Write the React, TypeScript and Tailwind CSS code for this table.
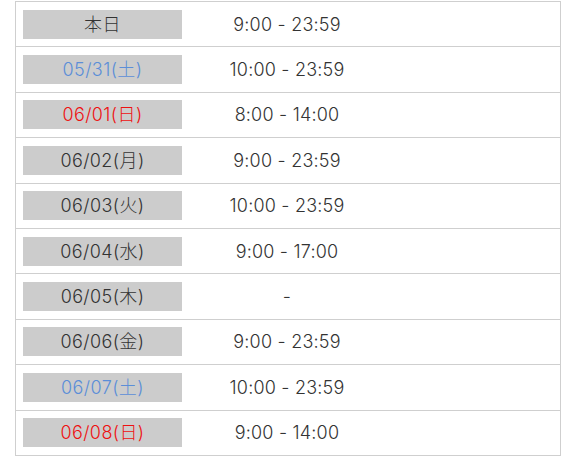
import React from "react";

const rows: { d: string; t: string; c: "n" | "b" | "r" }[] = [
  { d: "本日", t: "9:00 - 23:59", c: "n" },
  { d: "05/31(土)", t: "10:00 - 23:59", c: "b" },
  { d: "06/01(日)", t: "8:00 - 14:00", c: "r" },
  { d: "06/02(月)", t: "9:00 - 23:59", c: "n" },
  { d: "06/03(火)", t: "10:00 - 23:59", c: "n" },
  { d: "06/04(水)", t: "9:00 - 17:00", c: "n" },
  { d: "06/05(木)", t: "-", c: "n" },
  { d: "06/06(金)", t: "9:00 - 23:59", c: "n" },
  { d: "06/07(土)", t: "10:00 - 23:59", c: "b" },
  { d: "06/08(日)", t: "9:00 - 14:00", c: "r" },
];

export default function App() {
  return (
    <div
      className="w-[576px] h-[457px] bg-white pt-px overflow-hidden font-light"
      style={{ fontFamily: 'Inter, "Noto Sans CJK JP", sans-serif' }}
    >
      <div className="ml-[15px] w-[546px] border-l border-r border-t border-[#cfcfcf]">
        {rows.map((r, i) => (
          <div
            key={i}
            className="flex items-center h-[45.4px] border-b border-[#cfcfcf]"
          >
            <div className="pl-[7px] w-[166px] shrink-0">
              <div
                className={
                  "w-[159px] h-[29px] bg-[#cccccc] flex items-center justify-center text-[18px] tracking-[0.4px] leading-none pt-px " +
                  (r.c === "b"
                    ? "text-[#5b8ed8]"
                    : r.c === "r"
                    ? "text-[#ee1111]"
                    : "text-[#333333]")
                }
              >
                {r.d}
              </div>
            </div>
            <div className="w-[210px] text-center text-[18px] tracking-[0.2px] leading-none pt-px text-[#333333]">
              {r.t}
            </div>
          </div>
        ))}
      </div>
    </div>
  );
}
